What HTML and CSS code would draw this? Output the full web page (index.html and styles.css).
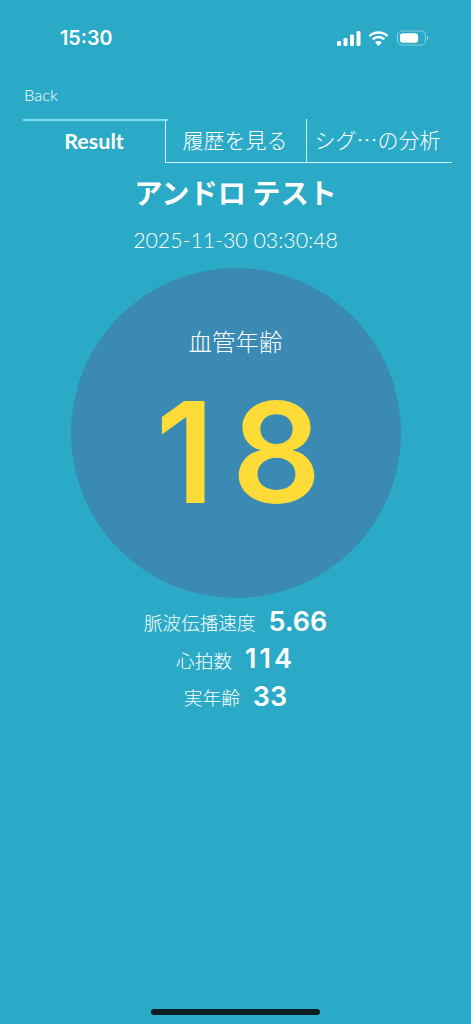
FILE: index.html
```html
<!DOCTYPE html>
<html lang="ja">
<head>
<meta charset="utf-8">
<title>Result</title>
<link rel="stylesheet" href="styles.css">
</head>
<body>
<div class="screen">
  <header class="status">
    <span class="time">15:30</span>
    <span class="status-icons">
      <svg class="signal" width="24" height="15" viewBox="0 0 24 15"><rect x="0" y="10" width="4" height="5" rx="1.2" fill="#fff"/><rect x="6.5" y="7" width="4" height="8" rx="1.2" fill="#fff"/><rect x="13" y="3.5" width="4" height="11.5" rx="1.2" fill="#fff"/><rect x="19.5" y="0" width="4" height="15" rx="1.2" fill="#fff"/></svg>
      <svg class="wifi" width="21" height="15" viewBox="0 0 21 15"><path d="M1.5 5.2a13 13 0 0 1 18 0M4.7 8.4a8.4 8.4 0 0 1 11.6 0" fill="none" stroke="#fff" stroke-width="2.5"/><path d="M10.5 15l-3.4-3.6a4.8 4.8 0 0 1 6.8 0z" fill="#fff"/></svg>
      <svg class="battery" width="33" height="16" viewBox="0 0 33 16"><rect x="1.5" y="1" width="28" height="14" rx="4.5" fill="none" stroke="#fff" stroke-opacity=".45"/><rect x="4" y="3.2" width="18" height="9.6" rx="2.8" fill="#fff"/><path d="M31 5.9c1 .4 1.4 1.1 1.4 2.1s-.4 1.7-1.4 2.1z" fill="#fff" fill-opacity=".5"/></svg>
    </span>
  </header>
  <div class="back">Back</div>
  <nav class="tabs">
    <div class="tab tab-active">Result</div>
    <div class="tab tab-mid">履歴を見る</div>
    <div class="tab tab-last">シグ…の分析</div>
  </nav>
  <h1 class="title">アンドロ テスト</h1>
  <div class="date">2025-11-30 03:30:48</div>
  <section class="circle">
    <div class="circle-label">血管年齢</div>
    <div class="circle-value">18</div>
  </section>
  <dl class="stats">
    <div class="stat"><dt>脈波伝播速度</dt><dd>5.66</dd></div>
    <div class="stat stat-hr"><dt>心拍数</dt><dd>114</dd></div>
    <div class="stat"><dt>実年齢</dt><dd>33</dd></div>
  </dl>
  <div class="home-bar"></div>
</div>
</body>
</html>
```
FILE: styles.css
```css
* { box-sizing: border-box; margin: 0; padding: 0; }
html, body { height: 100%; }
body {
  background: #2aaac6;
  color: #fff;
  font-family: "Inter", "Noto Sans CJK JP", sans-serif;
}
.screen {
  position: relative;
  width: 471px;
  height: 1024px;
  overflow: hidden;
  display: flex;
  flex-direction: column;
  align-items: center;
}
.status {
  align-self: stretch;
  height: 76px;
  display: flex;
  justify-content: space-between;
  align-items: flex-start;
  padding: 26px 42px 0 60px;
}
.time { font: 600 19.7px/24px "Inter", sans-serif; }
.status-icons { display: flex; align-items: center; gap: 7px; height: 24px; }
.back {
  align-self: stretch;
  padding-left: 24px;
  height: 43px;
  padding-top: 9px;
  font-family: "Lato", sans-serif;
  font-size: 16.5px;
  line-height: 20px;
  font-weight: 300;
  color: #fff;
}
.tabs {
  align-self: flex-start;
  margin-left: 23px;
  width: 429px;
  height: 44px;
  display: flex;
  font-size: 21px;
}
.tab {
  display: flex;
  align-items: center;
  justify-content: center;
  height: 44px;
  padding-bottom: 3px;
  font-family: "Noto Sans CJK JP", sans-serif;
  font-weight: 300;
}
.tab-active {
  width: 145px;
  padding-right: 3px;
  padding-bottom: 2px;
  border-top: 2px solid #7fdcef;
  font-family: "Lato", sans-serif;
  font-weight: 700;
  font-size: 21.5px;
}
.tab-mid {
  width: 141px;
  margin-left: -3px;
  padding-right: 2px;
  border-left: 1px solid #d5f1f7;
  border-bottom: 1px solid #d5f1f7;
}
.tab-last {
  width: 146px;
  padding-right: 4px;
  border-left: 1px solid #d5f1f7;
  border-bottom: 1px solid #d5f1f7;
}
.title {
  margin-top: 9px;
  font-size: 28.2px;
  line-height: 40px;
  font-weight: 700;
  font-family: "Noto Sans CJK JP", sans-serif;
}
.date {
  margin-top: 14px;
  font-family: "Lato", sans-serif;
  font-size: 21.3px;
  line-height: 28px;
  font-weight: 300;
  color: #fff;
}
.circle {
  margin-top: 14px;
  width: 330px;
  height: 330px;
  border-radius: 50%;
  background: #3a8ab3;
  display: flex;
  flex-direction: column;
  align-items: center;
}
.circle-label {
  margin-top: 57px;
  font-size: 23.5px;
  line-height: 32px;
  font-family: "Noto Sans CJK JP", sans-serif;
  font-weight: 300;
}
.circle-value {
  margin-top: 0;
  padding-left: 23px;
  font-size: 140px;
  line-height: 190px;
  font-weight: 600;
  letter-spacing: 17px;
  color: #fedb36;
}
.stats {
  margin-top: 5px;
  display: flex;
  flex-direction: column;
  align-items: center;
}
.stat {
  display: flex;
  align-items: center;
  gap: 13px;
  height: 37.5px;
}
dt {
  font-size: 18.67px;
  font-family: "Noto Sans CJK JP", sans-serif;
  font-weight: 300;
}
dd {
  font-family: "Inter", sans-serif;
  font-size: 27px;
  font-weight: 600;
  padding-bottom: 1px;
}
.stat-hr dd { letter-spacing: 3px; }
.home-bar {
  position: absolute;
  left: 151px;
  bottom: 9px;
  width: 169px;
  height: 6px;
  border-radius: 3px;
  background: #0d1b22;
}
```
